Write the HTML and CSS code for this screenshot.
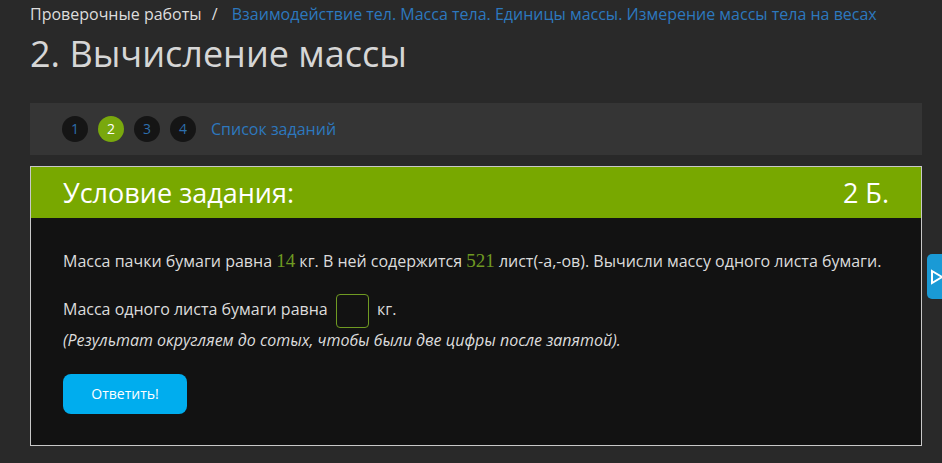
FILE: index.html
```html
<!DOCTYPE html>
<html lang="ru">
<head>
  <meta charset="UTF-8" />
  <title>2. Вычисление массы</title>
  <link rel="stylesheet" href="styles.css">
</head>
<body>
  <div class="page">
    <div class="breadcrumbs">
      <span>Проверочные работы</span>
      <span class="sep">/</span>
      <a href="#">Взаимодействие тел. Масса тела. Единицы массы. Измерение массы тела на весах</a>
    </div>
    <h1>2. Вычисление массы</h1>

    <div class="task-nav">
      <a class="num" href="#">1</a>
      <a class="num active" href="#">2</a>
      <a class="num" href="#">3</a>
      <a class="num" href="#">4</a>
      <a class="list-link" href="#">Список заданий</a>
    </div>

    <div class="task">
      <div class="task-head">
        <span>Условие задания:</span>
        <span>2 Б.</span>
      </div>
      <div class="task-body">
        <p class="cond">Масса пачки бумаги равна <span class="val">14</span> кг. В ней содержится <span class="val">521</span> лист(-а,-ов). Вычисли массу одного листа бумаги.</p>
        <p class="answer">Масса одного листа бумаги равна <input type="text" class="ans-input" /> кг.</p>
        <p class="hint">(Результат округляем до сотых, чтобы были две цифры после запятой).</p>
        <button type="button" class="submit-btn">Ответить!</button>
      </div>
    </div>
  </div>

  <div class="side-tab">
    <svg width="16" height="20" viewBox="0 0 16 20">
      <path d="M3 4 L13 10 L3 16 Z" fill="none" stroke="#fff" stroke-width="2"/>
    </svg>
  </div>
</body>
</html>
```

FILE: styles.css
```css
body {
  margin: 0;
  background: #292929;
  font-family: "Open Sans", Arial, sans-serif;
  color: #ddd;
}

.page {
  width: 892px;
  margin-left: 30px;
}

.breadcrumbs {
  padding-top: 3px;
  font-size: 16px;
  line-height: 22px;
  color: #ddd;
}

.breadcrumbs .sep {
  margin: 0 10px 0 6px;
}

.breadcrumbs a {
  color: #2d78be;
  text-decoration: none;
}

h1 {
  margin: 6px 0 0;
  font-size: 36px;
  font-weight: normal;
  line-height: 46px;
  color: #d6d6d6;
}

.task-nav {
  display: flex;
  align-items: center;
  gap: 10px;
  margin-top: 26px;
  height: 52px;
  padding-left: 32px;
  background: #353535;
  box-sizing: border-box;
}

.num {
  width: 26px;
  height: 26px;
  border-radius: 50%;
  background: #151515;
  color: #2d6fae;
  font-size: 14px;
  line-height: 26px;
  text-align: center;
  text-decoration: none;
}

.num.active {
  background: #79a80d;
  color: #fff;
}

.list-link {
  margin-left: 5px;
  color: #2d78be;
  font-size: 16px;
  text-decoration: none;
}

.task {
  margin-top: 11px;
  border: 1px solid #c8c8c8;
  background: #121212;
}

.task-head {
  display: flex;
  justify-content: space-between;
  align-items: center;
  height: 51px;
  padding: 0 32px;
  background: #78a800;
  color: #fff;
  font-size: 27px;
}

.task-body {
  padding: 31px 32px 31px;
}

.task-body p {
  margin: 0;
  font-size: 16px;
  line-height: 24px;
  color: #dcdcdc;
}

.val {
  font-family: "Liberation Serif", "Times New Roman", serif;
  font-size: 19px;
  color: #6f9a22;
}

.answer {
  margin-top: 19px !important;
  line-height: 34px !important;
}

.ans-input {
  box-sizing: border-box;
  width: 33px;
  height: 34px;
  margin: 0 4px 0 4px;
  vertical-align: middle;
  border: 1px solid #6f9a22;
  border-radius: 4px;
  background: #121212;
  color: #ddd;
}

.hint {
  font-style: italic;
}

.submit-btn {
  margin-top: 22px;
  width: 124px;
  height: 40px;
  border: none;
  border-radius: 8px;
  background: #00adee;
  color: #fff;
  font-family: "Open Sans", Arial, sans-serif;
  font-size: 14px;
  cursor: pointer;
}

.side-tab {
  position: absolute;
  left: 927px;
  top: 254px;
  width: 20px;
  height: 45px;
  border-radius: 5px 0 0 5px;
  background: #1a9ad6;
  display: flex;
  align-items: center;
  padding-left: 2px;
  box-sizing: border-box;
}
```
